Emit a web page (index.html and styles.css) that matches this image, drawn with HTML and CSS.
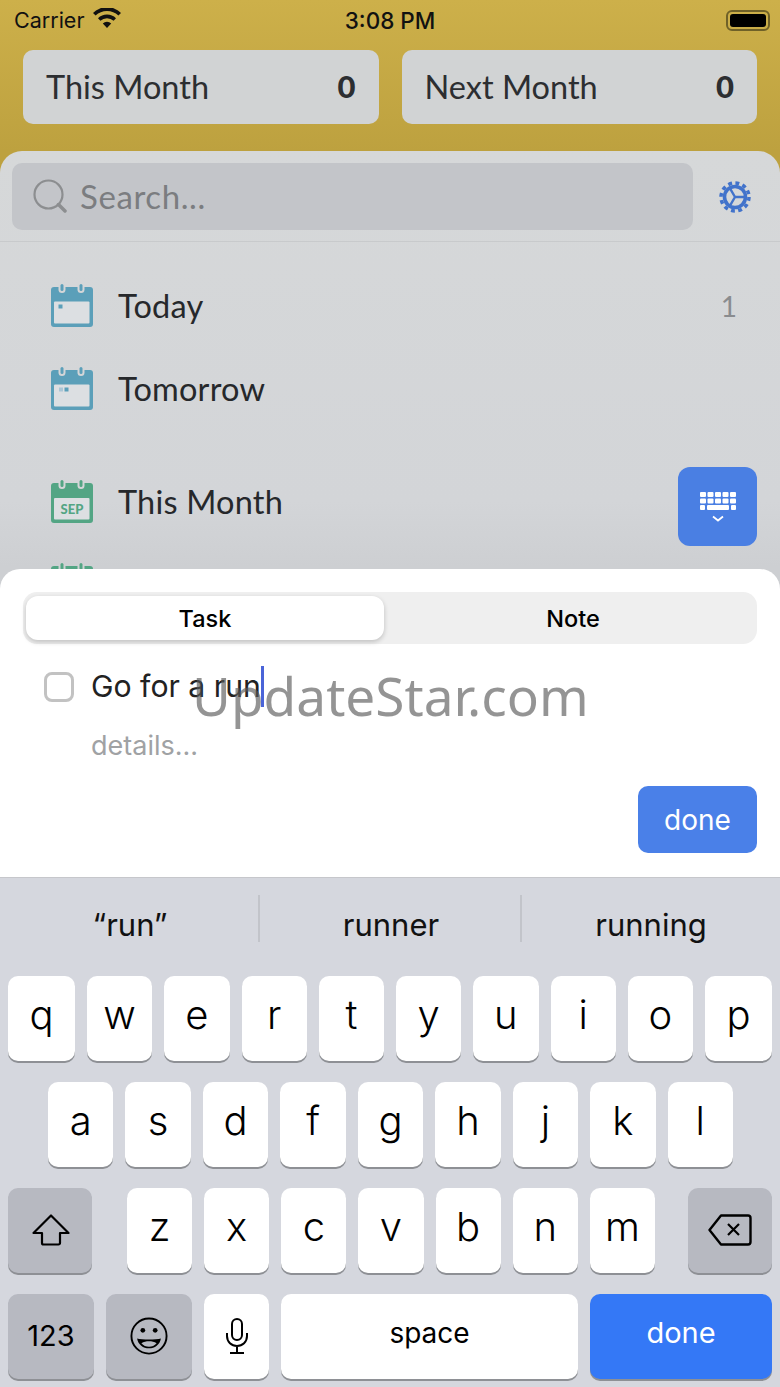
FILE: index.html
```html
<!DOCTYPE html>
<html>
<head>
    <meta charset="UTF-8">
    <title>Tasks</title>
    <link rel="stylesheet" href="styles.css">
</head>
<body>
    <div class="header">
        <div class="status-bar">
            <div class="status-left">
                <span>Carrier</span>
                <svg class="wifi" viewBox="0 0 28 20"><path d="M14 20 9.800 15.400a6 6 0 0 1 8.400 0zM7.400 12.800 5 10.200a13 13 0 0 1 18 0l-2.400 2.600a9.500 9.500 0 0 0-13.200 0zM2.600 7.600 0 4.900a20 20 0 0 1 28 0l-2.600 2.700a16.300 16.300 0 0 0-22.800 0z"/></svg>
            </div>
            <div class="status-time">3:08 PM</div>
            <div class="battery"><div class="battery-fill"></div></div>
        </div>
        <div class="month-cards">
            <div class="month-card"><span>This Month</span><b>0</b></div>
            <div class="month-card"><span>Next Month</span><b>0</b></div>
        </div>
    </div>

    <div class="panel">
        <div class="search-row">
            <div class="search-box">
                <svg class="search-icon" viewBox="0 0 34 34"><circle cx="15.500" cy="15.500" r="14" fill="none" stroke="#8c8e90" stroke-width="2.200"/><path d="M25.500 25.500 32 32" stroke="#8c8e90" stroke-width="3.500" stroke-linecap="round"/></svg>
                <span>Search...</span>
            </div>
            <div class="settings">
                <svg class="gear" viewBox="0 0 32 32"><circle cx="16" cy="16" r="14" fill="none" stroke="#4273cb" stroke-width="3.500" stroke-dasharray="3.900 3.430"/><circle cx="16" cy="16" r="10.500" fill="none" stroke="#4273cb" stroke-width="3.600"/><path d="M16 16 26 16M16 16 11 7.300M16 16 11 24.700" stroke="#4273cb" stroke-width="2.400"/></svg>
            </div>
        </div>

        <div class="list">
            <div class="list-row">
                <svg class="cal" viewBox="0 0 42 43"><rect y="3" width="42" height="40" rx="3" fill="#5b9fb9"/><rect x="3" y="17.500" width="35.500" height="22" rx="1" fill="#dcdfe2"/><rect x="7.500" y="0" width="7" height="9" rx="3.500" fill="#d4d6d8"/><rect x="26.500" y="0" width="7" height="9" rx="3.500" fill="#d4d6d8"/><rect x="9.500" y="0" width="3" height="7" rx="1.500" fill="#5b9fb9"/><rect x="28.500" y="0" width="3" height="7" rx="1.500" fill="#5b9fb9"/><rect x="7.500" y="20.500" width="4" height="4" fill="#5b9fb9"/></svg>
                <span class="row-label">Today</span>
                <span class="row-count">1</span>
            </div>
            <div class="list-row">
                <svg class="cal" viewBox="0 0 42 43"><rect y="3" width="42" height="40" rx="3" fill="#5b9fb9"/><rect x="3" y="17.500" width="35.500" height="22" rx="1" fill="#dcdfe2"/><rect x="7.500" y="0" width="7" height="9" rx="3.500" fill="#d4d6d8"/><rect x="26.500" y="0" width="7" height="9" rx="3.500" fill="#d4d6d8"/><rect x="9.500" y="0" width="3" height="7" rx="1.500" fill="#5b9fb9"/><rect x="28.500" y="0" width="3" height="7" rx="1.500" fill="#5b9fb9"/><rect x="8" y="20.500" width="4" height="4" fill="#a9c6d6"/><rect x="13.500" y="20.500" width="4" height="4" fill="#5b9fb9"/></svg>
                <span class="row-label">Tomorrow</span>
            </div>
            <div class="list-row section-start">
                <svg class="cal" viewBox="0 0 42 43"><rect y="3" width="42" height="40" rx="3" fill="#53a584"/><rect x="3" y="18" width="35.500" height="21.500" rx="1" fill="#dcdfe2"/><rect x="7.500" y="0" width="7" height="9" rx="3.500" fill="#d4d6d8"/><rect x="26.500" y="0" width="7" height="9" rx="3.500" fill="#d4d6d8"/><rect x="9.500" y="0" width="3" height="7" rx="1.500" fill="#53a584"/><rect x="28.500" y="0" width="3" height="7" rx="1.500" fill="#53a584"/><text x="21" y="34" class="cal-text">SEP</text></svg>
                <span class="row-label">This Month</span>
            </div>
            <div class="list-row">
                <svg class="cal" viewBox="0 0 42 43"><rect y="3" width="42" height="40" rx="3" fill="#53a584"/><rect x="7.500" y="0" width="7" height="9" rx="3.500" fill="#d0d2d4"/><rect x="26.500" y="0" width="7" height="9" rx="3.500" fill="#d0d2d4"/><rect x="9.500" y="0" width="3" height="7" rx="1.500" fill="#53a584"/><rect x="28.500" y="0" width="3" height="7" rx="1.500" fill="#53a584"/></svg>
            </div>
        </div>
    </div>

    <div class="kb-dismiss">
        <svg viewBox="0 0 36 30" class="kb-dismiss-icon">
            <g fill="#fff">
                <rect x="0" y="0" width="6" height="5" rx="1"/><rect x="7.500" y="0" width="6" height="5" rx="1"/><rect x="15" y="0" width="6" height="5" rx="1"/><rect x="22.500" y="0" width="6" height="5" rx="1"/><rect x="30" y="0" width="6" height="5" rx="1"/>
                <rect x="0" y="6.500" width="6" height="5" rx="1"/><rect x="7.500" y="6.500" width="6" height="5" rx="1"/><rect x="15" y="6.500" width="6" height="5" rx="1"/><rect x="22.500" y="6.500" width="6" height="5" rx="1"/><rect x="30" y="6.500" width="6" height="5" rx="1"/>
                <rect x="0" y="13" width="5" height="5" rx="1"/><rect x="7" y="13" width="22" height="5" rx="1"/><rect x="31" y="13" width="5" height="5" rx="1"/>
            </g>
            <path d="M13 24.500 18 28.500 23 24.500" fill="none" stroke="#fff" stroke-width="1.800"/>
        </svg>
    </div>

    <div class="composer">
        <div class="tabs">
            <div class="tab active">Task</div>
            <div class="tab note">Note</div>
        </div>
        <div class="task-line">
            <div class="checkbox"></div>
            <div class="task-text">Go for a run<span class="caret"></span></div>
        </div>
        <div class="details">details...</div>
        <div class="composer-actions"><div class="done-btn">done</div></div>
    </div>

    <div class="keyboard">
        <div class="suggestions">
            <div class="suggestion">“run”</div>
            <div class="suggestion">runner</div>
            <div class="suggestion">running</div>
        </div>
        <div class="kb-row row-one">
            <div class="key">q</div><div class="key">w</div><div class="key">e</div><div class="key">r</div><div class="key">t</div><div class="key">y</div><div class="key">u</div><div class="key">i</div><div class="key">o</div><div class="key">p</div>
        </div>
        <div class="kb-row row-two">
            <div class="key">a</div><div class="key">s</div><div class="key">d</div><div class="key">f</div><div class="key">g</div><div class="key">h</div><div class="key">j</div><div class="key">k</div><div class="key">l</div>
        </div>
        <div class="kb-row row-three">
            <div class="key dark wide-side icon-key">
                <svg class="kb-icon shift" viewBox="0 0 38 32"><path d="M19 1.500 36.500 19H28v10a1.500 1.500 0 0 1-1.500 1.500h-15A1.500 1.500 0 0 1 10 29V19H1.500z" fill="none" stroke="#000" stroke-width="2.200" stroke-linejoin="round"/></svg>
            </div>
            <div class="letters">
                <div class="key">z</div><div class="key">x</div><div class="key">c</div><div class="key">v</div><div class="key">b</div><div class="key">n</div><div class="key">m</div>
            </div>
            <div class="key dark wide-side icon-key">
                <svg class="kb-icon del" viewBox="0 0 44 32"><path d="M13 1.500h27a2.500 2.500 0 0 1 2.500 2.500v24a2.500 2.500 0 0 1-2.500 2.500H13L1.500 16z" fill="none" stroke="#000" stroke-width="2.400" stroke-linejoin="round"/><path d="M20 10 31 21M31 10 20 21" stroke="#000" stroke-width="2.200"/></svg>
            </div>
        </div>
        <div class="kb-row row-four">
            <div class="key dark num">123</div>
            <div class="key dark emoji icon-key">
                <svg class="kb-icon" viewBox="0 0 40 40"><circle cx="20" cy="20" r="18.500" fill="none" stroke="#000" stroke-width="2"/><circle cx="13.500" cy="14" r="2.500"/><circle cx="26.500" cy="14" r="2.500"/><path d="M7.500 22.500C12 24 28 24 32.500 22.500 31.500 29 26 33 20 33S8.500 29 7.500 22.500z" fill="#000"/><path d="M12 27.500c4.500-2.500 11.500-2.500 16 0-2 2.500-5 3.700-8 3.700s-6-1.200-8-3.700z" fill="#b7b9c1"/></svg>
            </div>
            <div class="key mic icon-key">
                <svg class="kb-icon" viewBox="0 0 22 36"><rect x="6" y="1" width="10" height="21" rx="5" fill="none" stroke="#000" stroke-width="2"/><path d="M1 15v3c0 6 4.500 10 10 10s10-4 10-10v-3M11 28v7M4 35h14" fill="none" stroke="#000" stroke-width="2"/></svg>
            </div>
            <div class="key space">space</div>
            <div class="key blue">done</div>
        </div>
    </div>

    <div class="watermark">UpdateStar.com</div>
</body>
</html>
```

FILE: styles.css
```css
* {
    box-sizing: border-box;
}
html, body {
    margin: 0;
    padding: 0;
}
body {
    position: relative;
    width: 780px;
    height: 1387px;
    overflow: hidden;
    font-family: Inter, "Liberation Sans", sans-serif;
    background: #bda13f;
    color: #000;
}

/* top yellow area */
.header {
    height: 151px;
    background: linear-gradient(#cdb04a, #bda13f);
}
.status-bar {
    height: 50px;
    padding: 0 10px 10px 14px;
    display: flex;
    align-items: center;
    justify-content: space-between;
    position: relative;
    font-size: 21.500px;
    color: #111;
}
.status-left {
    display: flex;
    align-items: center;
    gap: 9px;
}
.wifi {
    width: 28px;
    height: 20px;
    fill: #111;
    margin-top: -5px;
}
.status-time {
    position: absolute;
    left: 0;
    right: 0;
    top: 7px;
    text-align: center;
    font-size: 22.500px;
    font-weight: 500;
}
.battery {
    width: 44px;
    height: 21px;
    border: 2px solid #6f6128;
    border-radius: 6px;
    padding: 2px;
}
.battery-fill {
    height: 100%;
    background: #000;
    border-radius: 3px;
}
.month-cards {
    display: flex;
    gap: 23px;
    padding: 0 23px;
}
.month-card {
    flex: 1;
    height: 74px;
    background: #d1d3d4;
    border-radius: 10px;
    padding: 0 23px 2px;
    display: flex;
    align-items: center;
    justify-content: space-between;
    font-family: Lato, sans-serif;
    font-size: 32.500px;
    color: #2c2e31;
}
.month-card b {
    font-weight: 900;
    font-size: 31px;
}

/* dimmed list behind the composer */
.panel {
    height: 438px;
    overflow: hidden;
    border-radius: 22px 22px 0 0;
    background: linear-gradient(#d6d8d9 0, #d3d5d8 80%, #cdcfd2 95%);
    font-family: Lato, sans-serif;
}
.search-row {
    height: 91px;
    padding: 12px 0 0 12px;
    display: flex;
    border-bottom: 1px solid #c8cacc;
}
.search-box {
    width: 681px;
    height: 67px;
    background: #c3c5c9;
    border-radius: 10px;
    display: flex;
    align-items: center;
    padding: 0 0 2px 21px;
    gap: 13px;
    font-size: 33px;
    letter-spacing: 0.6px;
    color: #7b7d80;
}
.search-icon {
    width: 34px;
    height: 34px;
}
.settings {
    flex: 1;
    height: 67px;
    display: flex;
    align-items: center;
    justify-content: center;
    padding-right: 4px;
}
.gear {
    width: 32px;
    height: 32px;
}
.list {
    padding-top: 22px;
}
.list-row {
    height: 83px;
    padding: 0 43px 0 51px;
    display: flex;
    align-items: center;
    gap: 25px;
}
.section-start {
    margin-top: 30px;
}
.cal {
    width: 42px;
    height: 43px;
    flex-shrink: 0;
}
.cal-text {
    font-family: Lato, sans-serif;
    font-size: 13px;
    font-weight: 900;
    fill: #53a584;
    text-anchor: middle;
}
.row-label {
    flex: 1;
    font-size: 32.500px;
    letter-spacing: 0.2px;
    color: #26282b;
}
.row-count {
    font-size: 28px;
    color: #8a8c8f;
}

.kb-dismiss {
    position: absolute;
    left: 678px;
    top: 467px;
    width: 79px;
    height: 79px;
    border-radius: 12px;
    background: #4a7fe3;
    display: flex;
    align-items: center;
    justify-content: center;
}
.kb-dismiss-icon {
    width: 36px;
    height: 30px;
}

/* white sheet */
.composer {
    height: 308px;
    background: #fff;
    border-radius: 20px 20px 0 0;
    margin-top: -20px;
    padding: 23px 23px 0;
    position: relative;
}
.tabs {
    height: 52px;
    background: #efefef;
    border-radius: 14px;
    padding: 4px 3px;
    display: flex;
    font-size: 23.500px;
    font-weight: 500;
}
.tab {
    flex: 1;
    display: flex;
    align-items: center;
    justify-content: center;
    border-radius: 12px;
}
.tab.active {
    flex: 0 0 358px;
    background: #fff;
    box-shadow: 0 2px 5px rgba(0,0,0,0.2);
}
.tab.note {
    padding-left: 8px;
}
.task-line {
    display: flex;
    align-items: center;
    height: 41px;
    margin-top: 22px;
    padding-left: 21px;
}
.checkbox {
    width: 30px;
    height: 30px;
    border: 3px solid #c2c2c2;
    border-radius: 8px;
    margin-right: 17px;
}
.task-text {
    font-size: 30.200px;
    color: #222;
    display: flex;
    align-items: center;
    padding-bottom: 1px;
}
.caret {
    display: block;
    width: 3px;
    height: 41px;
    background: #4a64d8;
}
.details {
    padding-left: 68px;
    margin-top: 22px;
    font-size: 27px;
    color: #a0a2a4;
}
.composer-actions {
    display: flex;
    justify-content: flex-end;
    margin-top: 24px;
}
.done-btn {
    width: 119px;
    height: 67px;
    border-radius: 10px;
    background: #4a80e8;
    color: #fff;
    font-size: 28px;
    display: flex;
    align-items: center;
    justify-content: center;
}

/* keyboard */
.keyboard {
    height: 510px;
    background: #d5d7de;
    border-top: 1px solid #c6c7cb;
}
.suggestions {
    height: 98px;
    padding-bottom: 17px;
    display: flex;
    align-items: center;
}
.suggestion {
    flex: 1;
    height: 47px;
    padding: 12px 0 0 2px;
    font-size: 31px;
    display: flex;
    align-items: center;
    justify-content: center;
    color: #111;
    border-right: 2px solid #c2c4ca;
}
.suggestion:first-child {
    flex: 0 0 260px;
}
.suggestion:last-child {
    padding-left: 0;
    border-right: none;
}
.kb-row {
    display: flex;
    gap: 12px;
    padding: 0 8px;
    height: 85px;
    margin-bottom: 21px;
}
.key {
    flex: 1;
    height: 85px;
    background: #fff;
    border-radius: 10px;
    box-shadow: 0 2px 0 #8e9095;
    display: flex;
    align-items: center;
    justify-content: center;
    font-size: 40px;
    font-weight: 300;
    padding-bottom: 8px;
}
.icon-key {
    padding-bottom: 1px;
}
.row-one .key:first-child,
.row-one .key:last-child {
    flex: 0 0 67px;
}
.row-two {
    padding: 0 47px 0 48px;
}
.row-three {
    gap: 0;
    justify-content: space-between;
}
.letters {
    width: 528px;
    display: flex;
    gap: 12px;
}
.dark {
    background: #b7b9c1;
}
.wide-side {
    flex: 0 0 84px;
}
.row-three .letters {
    margin-left: 35px;
    margin-right: 33px;
}
.kb-icon {
    width: 38px;
    height: 32px;
}
.kb-icon.shift {
    margin-left: 2px;
}
.kb-icon.del {
    width: 44px;
}
.row-four {
    margin-bottom: 0;
}
.num {
    flex: 0 0 86px;
    font-size: 29px;
    font-weight: 400;
    padding-bottom: 3px;
}
.emoji {
    flex: 0 0 86px;
}
.emoji .kb-icon {
    height: 38px;
}
.mic {
    flex: 0 0 65px;
}
.mic .kb-icon {
    width: 22px;
    height: 36px;
}
.space {
    flex: 0 0 297px;
    font-size: 28px;
    font-weight: 400;
}
.blue {
    background: #3478f6;
    color: #fff;
    font-size: 29px;
    font-weight: 400;
}

.watermark {
    position: absolute;
    left: 192px;
    top: 661px;
    font-family: "Noto Sans", sans-serif;
    font-size: 53.200px;
    line-height: 70px;
    color: rgba(90,90,90,0.65);
}
```
